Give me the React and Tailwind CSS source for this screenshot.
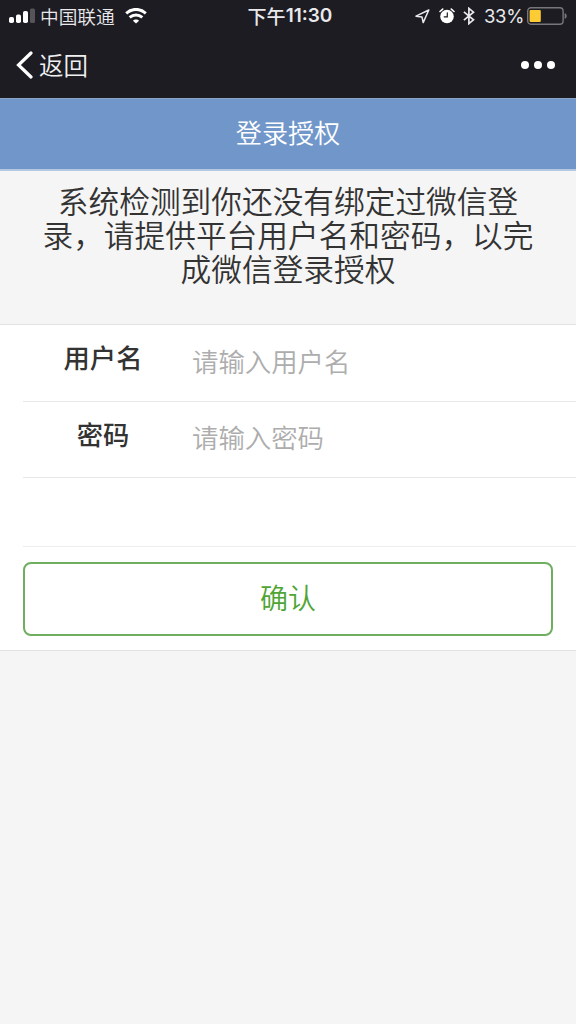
import { useState } from 'react';

/**
 * Cellular signal, three of four bars filled
 */
function SignalIcon({ className = '' }) {
  return (
    <svg width="26" height="16" viewBox="0 0 26 16" fill="currentColor" className={className} aria-hidden="true">
      <rect x="0" y="9" width="5" height="6" rx="1.8" />
      <rect x="7" y="6.5" width="5" height="8.5" rx="1.8" />
      <rect x="14" y="3" width="5" height="12" rx="1.8" />
      <rect x="21" y="0.5" width="5" height="14.5" rx="1.5" opacity="0.25" />
    </svg>
  );
}

function WifiIcon({ className = '' }) {
  return (
    <svg width="22" height="16" viewBox="0 0 22 16" className={className} fill="none" stroke="currentColor" strokeWidth="3" aria-hidden="true">
      <path d="M1.2 5.3C6.9 0.1 15.1 0.1 20.8 5.3" />
      <path d="M4.7 9.4C8.4 6.1 13.6 6.1 17.3 9.4" />
      <path d="M11 15.6L7.9 12.7C9.5 11 12.5 11 14.1 12.7Z" fill="currentColor" stroke="none" />
    </svg>
  );
}

function LocationIcon({ className = '' }) {
  return (
    <svg width="15" height="15" viewBox="0 0 15 15" className={className} fill="none" stroke="currentColor" strokeWidth="1.5" strokeLinejoin="round" aria-hidden="true">
      <path d="M13.8 1L1 7.2L7 8L8.2 13.6Z" />
    </svg>
  );
}

function AlarmIcon({ className = '' }) {
  return (
    <svg width="16" height="16" viewBox="0 0 16 16" className={className} fill="none" stroke="currentColor" strokeLinecap="round" aria-hidden="true">
      <circle cx="8" cy="8.5" r="6.8" fill="currentColor" stroke="none" />
      <path d="M1 3.5L3.7 1.1M15 3.5L12.3 1.1" strokeWidth="1.6" />
      <path d="M8.3 4.8V8.8H5.2" stroke="#1c1c22" strokeWidth="1.2" />
    </svg>
  );
}

function BluetoothIcon({ className = '' }) {
  return (
    <svg width="12" height="18" viewBox="0 0 12 18" className={className} fill="none" stroke="currentColor" strokeWidth="1.7" strokeLinejoin="miter" aria-hidden="true">
      <path d="M0.9 4.8L10.5 12.8L5.9 16.6V1.4L10.5 5.2L0.9 13.2" />
    </svg>
  );
}

function BatteryIcon({ className = '' }) {
  return (
    <svg width="40" height="18" viewBox="0 0 40 18" className={className} aria-hidden="true">
      <rect x="0.7" y="0.7" width="35.4" height="16.6" rx="3.2" fill="none" stroke="#77777b" strokeWidth="1.4" />
      <rect x="2.6" y="3" width="11.2" height="12" rx="1" fill="#fdcb34" />
      <path d="M37.6 6V12C39 11.4 39.7 10.4 39.7 9C39.7 7.6 39 6.6 37.6 6Z" fill="#77777b" />
    </svg>
  );
}

/**
 * StatusBar - carrier, clock and battery
 */
function StatusBar() {
  return (
    <div className="grid h-8 grid-cols-[1fr_auto_1fr] items-center pl-[9px] pr-[9px] text-[#e9e9ec]">
      <div className="flex items-center">
        <SignalIcon className="text-white" />
        <span className="ml-[5px] text-[18.7px] font-[350] leading-[30px]">中国联通</span>
        <WifiIcon className="ml-2.5 text-white" />
      </div>
      <div className="flex items-center pl-1 leading-8">
        <span className="text-[19px] font-medium">下午</span>
        <span className="font-[Inter] text-[19px] font-semibold">11:30</span>
      </div>
      <div className="flex items-center justify-end">
        <LocationIcon />
        <AlarmIcon className="ml-[9px] text-white" />
        <BluetoothIcon className="ml-2" />
        <span className="ml-[9px] font-[Inter] text-[18.5px] leading-8 tracking-[-0.3px]">33%</span>
        <BatteryIcon className="ml-[3px]" />
      </div>
    </div>
  );
}

function NavBar() {
  return (
    <div className="flex h-[66px] items-center justify-between pl-4 pr-[21px] text-white">
      <button className="flex items-center text-[24.5px] leading-9">
        <svg width="17" height="28" viewBox="0 0 17 28" fill="none" stroke="currentColor" strokeWidth="3.2" strokeLinecap="round" aria-hidden="true">
          <path d="M15 2L2.5 14L15 26" />
        </svg>
        <span className="ml-1.5 font-[350] text-[#f0f0f2]">返回</span>
      </button>
      <button className="flex gap-[5px]" aria-label="更多">
        <span className="size-2 rounded-full bg-white" />
        <span className="size-2 rounded-full bg-white" />
        <span className="size-2 rounded-full bg-white" />
      </button>
    </div>
  );
}

/**
 * FormRow - label on the left, borderless input on the right
 */
function FormRow({ label, placeholder, type = 'text', value, onChange }) {
  return (
    <label className="flex h-[76.5px] border-b border-[#e9e9e9]">
      <span className="w-40 pt-3 text-center text-[26.3px] font-medium leading-10 text-[#333333]">
        {label}
      </span>
      <input
        type={type}
        value={value}
        onChange={(e) => onChange(e.target.value)}
        placeholder={placeholder}
        className="ml-[9px] h-[70px] min-w-0 flex-1 bg-transparent text-[26.4px] font-[350] outline-none placeholder:text-[#adadad]"
      />
    </label>
  );
}

export default function App() {
  const [username, setUsername] = useState('');
  const [password, setPassword] = useState('');

  return (
    <div className="flex min-h-screen flex-col bg-[#f5f5f5] font-['Noto_Sans_CJK_SC',sans-serif]">
      <header className="bg-[#1c1c22]">
        <StatusBar />
        <NavBar />
      </header>

      <h1 className="h-[73px] border-b-2 border-t border-b-[#b5c8e3] border-t-[#8ba5c8] bg-[#7197ca] text-center text-[26.1px] font-[350] leading-[66px] text-white">
        登录授权
      </h1>

      <p className="h-[153px] px-[38px] pt-3 text-center text-[30.7px] font-[350] leading-[34px] text-[#333333]">
        系统检测到你还没有绑定过微信登
        <br />
        录，请提供平台用户名和密码，以完
        <br />
        成微信登录授权
      </p>

      <form
        className="border-y border-[#e2e2e2] bg-white"
        onSubmit={(e) => e.preventDefault()}
      >
        <div className="pl-[23px]">
          <FormRow label="用户名" placeholder="请输入用户名" value={username} onChange={setUsername} />
          <FormRow label="密码" placeholder="请输入密码" type="password" value={password} onChange={setPassword} />
          <div className="h-[69px] border-b border-[#ededed]" />
        </div>
        <div className="px-[23px] pb-3.5 pt-[15px]">
          <button
            type="submit"
            className="block h-[74px] w-full rounded-lg border-2 border-[#6fae5f] pb-1 text-[28px] font-[350] leading-[66px] text-[#4ea534]"
          >
            确认
          </button>
        </div>
      </form>
    </div>
  );
}
